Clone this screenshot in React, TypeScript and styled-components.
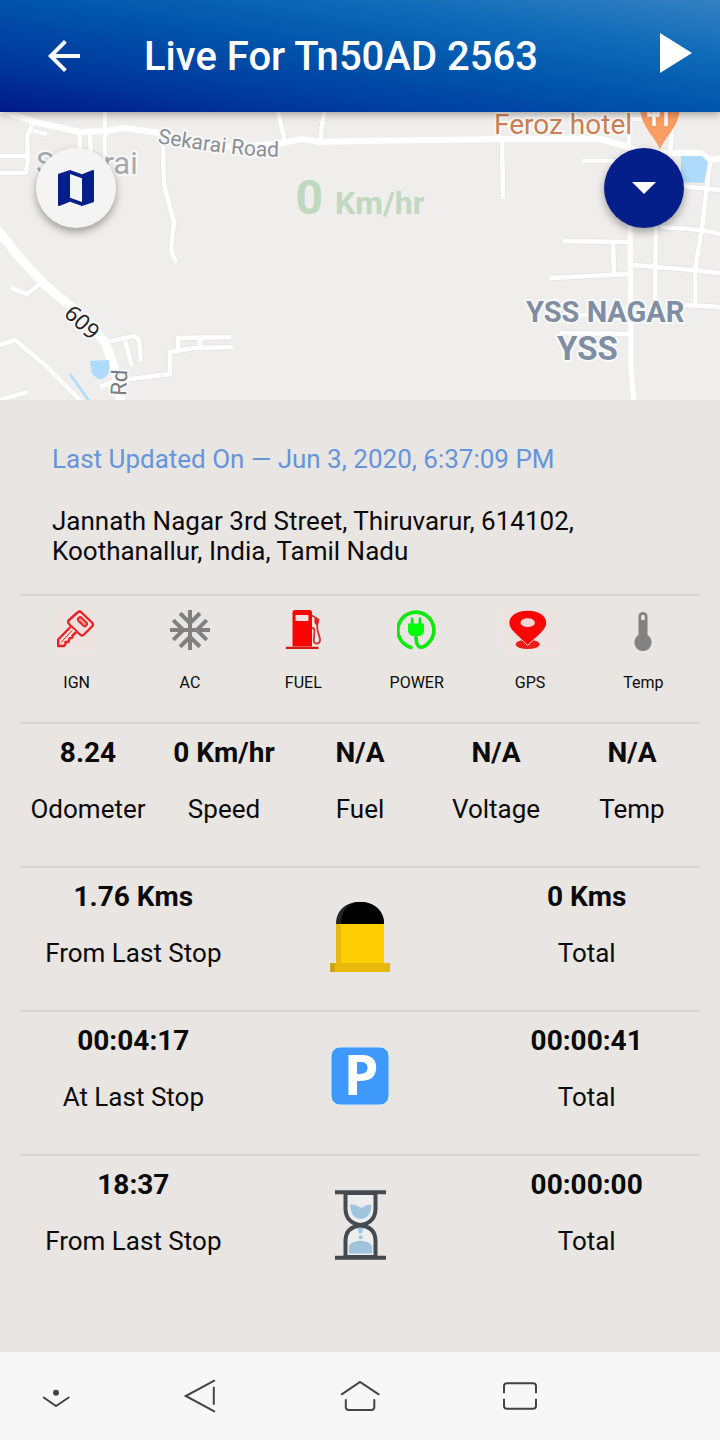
import React from "react";
import styled, { createGlobalStyle } from "styled-components";

const GlobalStyle = createGlobalStyle`
  *, *::before, *::after { box-sizing: border-box; }
  body {
    margin: 0;
    background: #e9e5e2;
    color: #0b0b0b;
    font-family: Roboto, "Liberation Sans", sans-serif;
  }
  button { border: 0; padding: 0; background: none; color: inherit; font: inherit; cursor: pointer; }
  svg { display: block; }
`;

const Screen = styled.div`
  display: flex;
  flex-direction: column;
  min-height: 100vh;
`;

const AppBar = styled.header`
  position: relative;
  z-index: 1;
  display: flex;
  align-items: center;
  height: 112px;
  padding: 0 28px 0 40px;
  color: #fff;
  background: linear-gradient(to top right, #001a86 0%, #003a9e 24%, #0054aa 50%, #0f6ab8 74%, #3481c2 100%);
  box-shadow: 0 2px 8px rgba(0, 0, 0, 0.35);
`;

const BarButton = styled.button`
  flex: none;
  display: grid;
  place-items: center;
`;

const Title = styled.h1`
  flex: 1;
  margin: 0 0 0 56px;
  padding-top: 2px;
  font-size: 40px;
  line-height: 48px;
  font-weight: 500;
`;

const MapArea = styled.section`
  position: relative;
  height: 288px;
  overflow: hidden;
  background: #efeeed;
`;

const MapDrawing = styled.svg`
  width: 100%;
  height: 100%;
`;

const SpeedReadout = styled.p`
  position: absolute;
  top: 56px;
  left: 0;
  right: 0;
  margin: 0;
  text-align: center;
  font-size: 32px;
  line-height: 60px;
  font-weight: 700;
  color: #c0d8be;
`;

const SpeedNumber = styled.span`
  font-size: 48px;
  margin-right: 4px;
`;

const RoundButton = styled.button<{ $side: "left" | "right"; $solid?: boolean }>`
  position: absolute;
  top: 36px;
  ${(p) => p.$side}: 36px;
  display: grid;
  place-items: center;
  width: 80px;
  height: 80px;
  border-radius: 50%;
  color: ${(p) => (p.$solid ? "#fff" : "#041e8a")};
  background: ${(p) => (p.$solid ? "#041e8a" : "#f4f4f4")};
  box-shadow: 0 4px 8px rgba(0, 0, 0, 0.35);
`;

const Panel = styled.main`
  flex: 1;
  padding: 44px 20px 52px;
  background: #e9e5e2;
`;

const Location = styled.div`
  display: grid;
  gap: 32px;
  padding: 0 32px 28px;
  font-size: 26px;
  line-height: 30px;
`;

const Updated = styled.p`
  margin: 0;
  color: #6495dc;
`;

const Address = styled.address`
  max-width: 560px;
  font-style: normal;
`;

const Row = styled.div<{ $columns: number }>`
  display: grid;
  grid-template-columns: repeat(${(p) => p.$columns}, 1fr);
  border-top: 2px solid #d7d4d1;
  padding-top: 14px;
`;

const StatusItem = styled.div`
  display: flex;
  flex-direction: column;
  align-items: center;
  gap: 23px;
  padding-bottom: 29px;
  font-size: 16px;
  line-height: 20px;
`;

const Reading = styled.div`
  display: flex;
  flex-direction: column;
  align-items: center;
  gap: 25px;
  padding-bottom: 41px;
  white-space: nowrap;
`;

const Value = styled.strong`
  font-size: 28px;
  line-height: 30px;
  font-weight: 700;
`;

const Label = styled.span`
  font-size: 26px;
  line-height: 32px;
`;

const TripIcon = styled.div`
  display: flex;
  justify-content: center;
  padding-top: 20px;
`;

const SystemNav = styled.nav`
  display: grid;
  grid-template-columns: 7fr 11fr 9fr 11fr 7fr;
  align-items: center;
  justify-items: center;
  height: 88px;
  background: #f7f7f7;
  color: #444;
`;

const NavButton = styled.button`
  width: 48px;
  height: 48px;
`;

const MINOR_ROADS = [
  "M33 11L27 25L28 45L26 61H0",
  "M0 44H27",
  "M33 19L47 22",
  "M105 0V60",
  "M80 21L79 60",
  "M90 23L92 60",
  "M163 34L164 73L174 110L171 138L176 151",
  "M278 0L285 30",
  "M324 0L320 29",
  "M502 27L503 87",
  "M582 49H640",
  "M629 0V34",
  "M629 7H645",
  "M673 0L670 42",
  "M710 48L707 75L702 116L695 158V194",
  "M680 74L720 78",
  "M563 129L632 130",
  "M613 130L614 162",
  "M550 166L630 162",
  "M656 110L655 190",
  "M660 115L702 118L720 122",
  "M632 153L693 158L720 161",
  "M685 193L720 195",
  "M560 221L631 222",
  "M575 203H640",
  "M11 176L27 182L40 172",
  "M0 233L15 228L45 253L82 290",
  "M0 288L27 280",
  "M110 229L121 227L135 224L139 228L141 249",
  "M125 229L132 254",
  "M100 275L115 269L170 262V240L195 236L233 235",
  "M178 238V226L231 225",
  "M200 226V236",
];

const MapPicture = () => (
  <MapDrawing viewBox="0 0 720 288" preserveAspectRatio="xMidYMid slice" role="img" aria-label="Map of Koothanallur">
    <rect width="720" height="288" fill="#efeeed" />
    <g fill="none" strokeLinejoin="round">
      <g stroke="#e3e3e4" strokeWidth="6">
        {MINOR_ROADS.map((d) => <path key={d} d={d} />)}
      </g>
      <g stroke="#fff" strokeWidth="4.6">
        {MINOR_ROADS.map((d) => <path key={d} d={d} />)}
        <path strokeWidth="6" d="M0 -2L35 10L80 20L105 19L125 16L160 21L220 35L277 32L302 27L320 30L360 29L500 27L600 27L625 34L645 41H700L710 48L722 46" />
        <path strokeWidth="5" d="M630 110L631 218V258L634 290" />
        <path strokeWidth="9" d="M-4 116L20 146L45 173L75 198L105 230L115 258L121 290" />
      </g>
      <path d="M70 262L90 290" stroke="#b0dcfb" strokeWidth="2.5" />
    </g>
    <path d="M681 44H702L708 50L704 71L681 70Z" fill="#aedafc" />
    <path d="M90 249L109 248L110 260L103 267H98L92 262Z" fill="#aedafc" />
    <g stroke="#f8f8f8" strokeWidth="4" strokeLinejoin="round" paintOrder="stroke">
      <path id="sekarai-road" d="M157 31Q198 38 235 42T290 44" fill="none" stroke="none" />
      <text fontSize="21" fill="#8b8f93"><textPath href="#sekarai-road">Sekarai Road</textPath></text>
      <text x="36" y="62" fontSize="31" fill="#a6aaae">Sekarai</text>
      <text x="494" y="22" fontSize="28" fill="#cb8053">Feroz hotel</text>
      <text x="526" y="210" fontSize="29" fontWeight="700" fill="#7f8ea2">YSS NAGAR</text>
      <text x="557" y="248" fontSize="33" fontWeight="700" fill="#7f8ea2">YSS</text>
      <text transform="translate(63 203) rotate(43)" fontSize="22" fill="#222" fontFamily="Noto Sans, sans-serif">609</text>
      <text transform="translate(126 284) rotate(-87)" fontSize="22" fill="#777c80">Rd</text>
    </g>
    <path d="M640 -6C640 14 653 22 660 37C667 22 680 14 680 -6Z" fill="#fb9c62" />
    <path d="M654 -1V14M666 -1V14M649 0V3H658V0" stroke="#fff" strokeWidth="3.5" fill="none" />
  </MapDrawing>
);

const KeyIcon = () => (
  <svg width="40" height="40" viewBox="0 0 40 40" aria-hidden="true" fill="none" stroke="#e52226" strokeWidth="2.4" strokeLinejoin="round">
    <rect width="40" height="40" fill="#ece3e0" stroke="none" />
    <path d="M20.500 2.500Q22.500 0.500 24.500 2.500L35 12.500Q37 14.500 35 16.500L27 24.500Q25 26.500 23 24.500L12.500 14.500Q10.500 12.500 11.500 10.500Z" fill="#eedfdc" />
    <path d="M13.500 17L1.200 29.500V36H7L8.500 34V32H11.500L12.500 28.500L15.500 27.500V25.500L19.500 22" fill="#eedfdc" />
    <path d="M4 32.500L15 20.500" strokeWidth="1" />
    <rect x="20" y="9.500" width="11" height="4.500" rx="2.200" transform="rotate(45 25.500 11.700)" strokeWidth="1.800" fill="#e99182" />
  </svg>
);

const SnowIcon = () => (
  <svg width="40" height="40" viewBox="2 2 20 20" fill="#808080" aria-hidden="true">
    <path d="M22 11h-4.170l3.240-3.240-1.410-1.420L15 11h-2V9l4.660-4.660-1.420-1.410L13 6.170V2h-2v4.170L7.760 2.930 6.340 4.340 11 9v2H9L4.340 6.340 2.930 7.760 6.170 11H2v2h4.170l-3.240 3.240 1.410 1.420L9 13h2v2l-4.660 4.660 1.420 1.410L11 17.830V22h2v-4.170l3.240 3.240 1.420-1.410L13 15v-2h2l4.660 4.660 1.410-1.420L17.830 13H22z" />
  </svg>
);

const FuelIcon = () => (
  <svg width="40" height="40" viewBox="0 0 40 40" aria-hidden="true">
    <path d="M12 0H26.500Q29 0 29 2.500V36.500H9.500V2.500Q9.500 0 12 0Z" fill="#fb0303" />
    <rect x="12.500" y="5" width="13" height="6" rx="1" fill="#f6dfdc" />
    <path d="M3 37.800H35.500" stroke="#d81a14" strokeWidth="2.200" />
    <path d="M29 5.500L35.500 9.500Q33.500 15 34.500 20L37 29Q37.500 33 34 33.500Q30.500 33.500 30.800 30L31.500 21Q31.500 18 29 18" fill="none" stroke="#d93232" strokeWidth="1.800" />
    <path d="M31.500 8L36 10.500L34.500 16L31.500 13Z" fill="#e31d1d" />
  </svg>
);

const PowerIcon = () => (
  <svg width="40" height="40" viewBox="0 0 40 40" aria-hidden="true">
    <g fill="none" stroke="#0be80b" strokeLinecap="round">
      <path d="M14 37.500A18 18 0 1 1 31.500 33Q27.500 37.500 23.500 37.300Q19.200 36.500 19 27" strokeWidth="3.600" />
      <path d="M15.200 9V14M23 9V14" strokeWidth="2.800" />
    </g>
    <path d="M11 13.500H27V21Q26.500 24.500 23 26H15Q11.500 24.500 11 21Z" fill="#00ff0a" />
  </svg>
);

const GpsIcon = () => (
  <svg width="40" height="40" viewBox="0 0 40 40" overflow="visible" aria-hidden="true">
    <rect x="-9" width="59" height="40" fill="#ece3e1" />
    <ellipse cx="17.700" cy="34.300" rx="12" ry="4.800" fill="#ee1b1b" />
    <path d="M17.700 0.200C7 0.200 -1.200 5.500 -1.200 13C-1.200 20 9 26.500 17.700 35.500C26.500 26.500 36.700 20 36.700 13C36.700 5.500 28.500 0.200 17.700 0.200Z" fill="#fd0505" stroke="#ece3e1" strokeWidth="1" />
    <ellipse cx="17.700" cy="12.700" rx="7.200" ry="4.400" fill="#f3d8d5" />
  </svg>
);

const ThermometerIcon = () => (
  <svg width="40" height="40" viewBox="0 0 40 40" overflow="visible" aria-hidden="true">
    <rect x="15.500" y="2" width="9" height="28" rx="4.500" fill="#828282" />
    <circle cx="20" cy="32.300" r="8.600" fill="#828282" />
    <path d="M18.200 10V6.500Q18.200 4.700 20 4.700T21.800 6.500V10Z" fill="#e9e5e2" />
  </svg>
);

const BollardIcon = () => (
  <svg width="60" height="70" viewBox="0 0 60 70" aria-hidden="true">
    <path d="M6 22C6 8 16 0 30 0S54 8 54 22Z" fill="#252525" />
    <path d="M11 22C11 10 17 0 30 0S54 8 54 22Z" fill="#000" />
    <path d="M6 22H54V61H6Z" fill="#ffcf03" />
    <path d="M6 22H11V61H6Z" fill="#e9b90d" />
    <path d="M0 61H60V70H0Z" fill="#e6b90c" />
    <path d="M0 61H5V70H0Z" fill="#cfa316" />
  </svg>
);

const ParkingIcon = () => (
  <svg width="60" height="60" viewBox="0 0 60 60" overflow="visible" aria-hidden="true">
    <rect x="1" y="1" width="58" height="58" rx="9" fill="#3f98fc" stroke="#d9ecfa" strokeWidth="1" />
    <text x="31" y="49" textAnchor="middle" fontFamily="Open Sans, sans-serif" fontWeight="700" fontSize="56" fill="#fff">P</text>
  </svg>
);

const HourglassIcon = () => (
  <svg width="60" height="70" viewBox="0 0 60 70" aria-hidden="true">
    <g fill="#eceded" stroke="#454a50" strokeWidth="4">
      <path d="M15.500 3V19Q16 33 30.500 35Q45 33 45.500 19V3Z" />
      <path d="M15.500 67V50Q16 37 30.500 35.500Q45 37 45.500 50V67Z" />
      <path d="M5 2.300H56M5 67.700H56" />
    </g>
    <g fill="#a0c4de">
      <path d="M20 14.500Q25 14 28.500 16.500Q32 19 35 16Q38 14 41.300 15Q41.500 28 30.500 29Q20.500 28 20 14.500Z" />
      <path d="M19 63.500V56Q22 51 30.500 50.700Q39 51 42 56V63.500Z" />
      <path d="M27.500 38H33.500L32 43H29Z" />
      <circle cx="30.700" cy="47.200" r="2" />
    </g>
  </svg>
);

const statuses = [
  { label: "IGN", Icon: KeyIcon },
  { label: "AC", Icon: SnowIcon },
  { label: "FUEL", Icon: FuelIcon },
  { label: "POWER", Icon: PowerIcon },
  { label: "GPS", Icon: GpsIcon },
  { label: "Temp", Icon: ThermometerIcon },
];

const readings = [
  { value: "8.24", label: "Odometer" },
  { value: "0 Km/hr", label: "Speed" },
  { value: "N/A", label: "Fuel" },
  { value: "N/A", label: "Voltage" },
  { value: "N/A", label: "Temp" },
];

const trips = [
  { left: { value: "1.76 Kms", label: "From Last Stop" }, Icon: BollardIcon, total: "0 Kms" },
  { left: { value: "00:04:17", label: "At Last Stop" }, Icon: ParkingIcon, total: "00:00:41" },
  { left: { value: "18:37", label: "From Last Stop" }, Icon: HourglassIcon, total: "00:00:00" },
];

const navItems = [
  {
    name: "Hide navigation",
    art: (
      <>
        <path d="M11.700 25.500L24 34L36.700 25.500" />
        <circle cx="24" cy="20.700" r="3" fill="currentColor" stroke="none" />
      </>
    ),
  },
  { name: "Back", art: <path d="M38.300 8.700L9.700 24L38.300 39.300M37.800 15.500V32" /> },
  { name: "Home", art: <path d="M5.700 22.300L24 10L42.700 22.300M9.800 28V35Q9.800 38 12.800 38H35.300Q38.300 38 38.300 35V28" /> },
  { name: "Recent apps", art: <path d="M8 20.500V14.300Q8 11.300 11 11.300H37Q40 11.300 40 14.300V20.500M8 27.500V33.700Q8 36.700 11 36.700H37Q40 36.700 40 33.700V27.500" /> },
];

const Figure = ({ value, label }: { value: string; label: string }) => (
  <Reading>
    <Value>{value}</Value>
    <Label>{label}</Label>
  </Reading>
);

export default function App() {
  return (
    <Screen>
      <GlobalStyle />
      <AppBar>
        <BarButton aria-label="Back">
          <svg width="48" height="48" viewBox="0 0 24 24" fill="currentColor">
            <path d="M20 11H7.830l5.590-5.590L12 4l-8 8 8 8 1.410-1.410L7.830 13H20v-2z" />
          </svg>
        </BarButton>
        <Title>Live For Tn50AD 2563</Title>
        <BarButton aria-label="Play">
          <svg width="32" height="46" viewBox="0 0 32 46" fill="currentColor">
            <path d="M0 0L32 20L0 40Z" />
          </svg>
        </BarButton>
      </AppBar>

      <MapArea>
        <MapPicture />
        <SpeedReadout>
          <SpeedNumber>0</SpeedNumber> Km/hr
        </SpeedReadout>
        <RoundButton $side="left" aria-label="Map type">
          <svg width="48" height="48" viewBox="0 0 24 24" fill="currentColor">
            <path d="M20.500 3l-.16.03L15 5.100 9 3 3.360 4.900c-.21.07-.36.25-.36.48V20.500c0 .28.22.5.5.5l.16-.03L9 18.900l6 2.100 5.640-1.900c.21-.07.36-.25.36-.48V3.500c0-.28-.22-.5-.5-.5zM15 19l-6-2.110V5l6 2.110V19z" />
          </svg>
        </RoundButton>
        <RoundButton $side="right" $solid aria-label="More options">
          <svg width="24" height="12" viewBox="0 0 24 12" fill="currentColor">
            <path d="M0 0H24L12 12Z" />
          </svg>
        </RoundButton>
      </MapArea>

      <Panel>
        <Location>
          <Updated>Last Updated On — Jun 3, 2020, 6:37:09 PM</Updated>
          <Address>Jannath Nagar 3rd Street, Thiruvarur, 614102, Koothanallur, India, Tamil Nadu</Address>
        </Location>
        <Row $columns={6}>
          {statuses.map(({ label, Icon }) => (
            <StatusItem key={label}>
              <Icon />
              <span>{label}</span>
            </StatusItem>
          ))}
        </Row>
        <Row $columns={5}>
          {readings.map((r) => (
            <Figure key={r.label} {...r} />
          ))}
        </Row>
        {trips.map(({ left, Icon, total }) => (
          <Row $columns={3} key={left.value}>
            <Figure {...left} />
            <TripIcon>
              <Icon />
            </TripIcon>
            <Figure value={total} label="Total" />
          </Row>
        ))}
      </Panel>

      <SystemNav aria-label="System navigation">
        {navItems.map(({ name, art }) => (
          <NavButton key={name} aria-label={name}>
            <svg width="48" height="48" viewBox="0 0 48 48" fill="none" stroke="currentColor" strokeWidth="2" strokeLinecap="round">
              {art}
            </svg>
          </NavButton>
        ))}
      </SystemNav>
    </Screen>
  );
}
